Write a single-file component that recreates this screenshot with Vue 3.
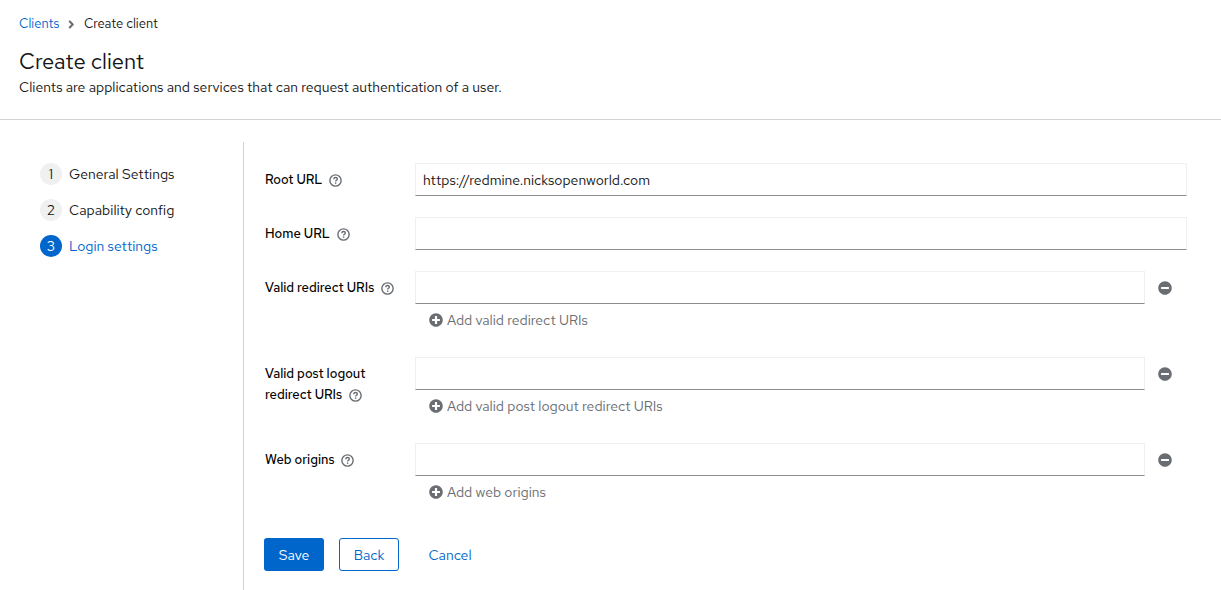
<template>
  <div class="page">
    <header class="page-header">
      <nav class="breadcrumb" aria-label="Breadcrumb">
        <a href="#clients">Clients</a>
        <svg class="breadcrumb-divider" viewBox="0 0 256 512" aria-hidden="true">
          <path :d="icons.angleRight" />
        </svg>
        <span aria-current="page">Create client</span>
      </nav>
      <h1 class="page-title">Create client</h1>
      <p class="page-description">
        Clients are applications and services that can request authentication of a user.
      </p>
    </header>

    <div class="wizard">
      <nav class="wizard-nav" aria-label="Wizard steps">
        <ol class="wizard-steps">
          <li v-for="(step, index) in steps" :key="step">
            <button
              type="button"
              :class="['wizard-step', { current: currentStep === index }]"
              @click="currentStep = index"
            >
              <span class="step-number">{{ index + 1 }}</span>
              <span>{{ step }}</span>
            </button>
          </li>
        </ol>
      </nav>

      <form class="wizard-main" @submit.prevent>
        <div v-for="field in fields" :key="field.id" class="form-group">
          <div class="form-label">
            <label :for="field.id">{{ field.label }}</label>
            <button type="button" class="help-button" :aria-label="'Help for ' + field.label">
              <svg viewBox="0 0 12 12" aria-hidden="true">
                <circle cx="6" cy="6" r="5.2" />
                <path d="M4.4 4.8C4.4 3.8 5.1 3.3 6 3.3s1.7.5 1.7 1.4C7.7 5.8 6.1 5.7 6.1 6.9" />
                <path d="M6.1 7.8v1.3" />
              </svg>
            </button>
          </div>
          <div class="form-control">
            <div class="input-row">
              <input :id="field.id" v-model="field.value" type="text" class="text-input" />
              <button v-if="field.addLabel" type="button" class="remove-button" aria-label="Remove">
                <svg class="icon" viewBox="0 0 512 512" aria-hidden="true">
                  <path :d="icons.minusCircle" />
                </svg>
              </button>
            </div>
            <button v-if="field.addLabel" type="button" class="add-button">
              <svg class="icon" viewBox="0 0 512 512" aria-hidden="true">
                <path :d="icons.plusCircle" />
              </svg>
              {{ field.addLabel }}
            </button>
          </div>
        </div>

        <div class="form-actions">
          <button type="submit" class="button primary">Save</button>
          <button type="button" class="button secondary">Back</button>
          <button type="button" class="button link">Cancel</button>
        </div>
      </form>
    </div>
  </div>
</template>

<script setup>
import { ref } from "vue";

const steps = ["General Settings", "Capability config", "Login settings"];
const currentStep = ref(2);

const fields = ref([
  { id: "root-url", label: "Root URL", value: "https://redmine.nicksopenworld.com" },
  { id: "home-url", label: "Home URL", value: "" },
  {
    id: "redirect-uris",
    label: "Valid redirect URIs",
    value: "",
    addLabel: "Add valid redirect URIs",
  },
  {
    id: "logout-uris",
    label: "Valid post logout redirect URIs",
    value: "",
    addLabel: "Add valid post logout redirect URIs",
  },
  { id: "web-origins", label: "Web origins", value: "", addLabel: "Add web origins" },
]);

const icons = {
  angleRight:
    "M224 273l-136 136c-9 9-25 9-34 0l-23-23c-9-9-9-24 0-34l97-96-97-96c-9-9-9-25 0-34L54 103c9-9 25-9 34 0l136 136c9 9 9 25 0 34z",
  plusCircle:
    "M256 8C119 8 8 119 8 256s111 248 248 248 248-111 248-248S393 8 256 8zm144 276c0 7-5 12-12 12h-92v92c0 7-5 12-12 12h-56c-7 0-12-5-12-12v-92h-92c-7 0-12-5-12-12v-56c0-7 5-12 12-12h92v-92c0-7 5-12 12-12h56c7 0 12 5 12 12v92h92c7 0 12 5 12 12v56z",
  minusCircle:
    "M256 8C119 8 8 119 8 256s111 248 248 248 248-111 248-248S393 8 256 8zM124 296c-7 0-12-5-12-12v-56c0-7 5-12 12-12h264c7 0 12 5 12 12v56c0 7-5 12-12 12H124z",
};
</script>

<style>
body {
  background-color: #ffffff;
}
</style>

<style scoped>
.page {
  display: flex;
  flex-direction: column;
  min-height: 100vh;
  color: #151515;
  font-family: "Red Hat Text", Lato, sans-serif;
  font-size: 14px;
  line-height: 22px;
}

button,
input {
  font: inherit;
}

button {
  background: none;
  border: none;
  padding: 0;
  cursor: pointer;
}

.page-header {
  padding: 14px 19px 21px;
  border-bottom: 1px solid #d2d2d2;
}

.breadcrumb {
  display: flex;
  align-items: center;
  font-size: 13px;
  line-height: 20px;
}

.breadcrumb a {
  color: #0066cc;
  text-decoration: none;
}

.breadcrumb-divider {
  height: 13px;
  margin: 0 9px;
  fill: #6a6e73;
}

.page-title {
  margin: 13px 0 0;
  font-size: 22px;
  font-weight: 400;
  line-height: 29px;
}

.page-description {
  margin: 0;
}

.wizard {
  display: flex;
  flex: 1;
  padding-top: 22px;
}

.wizard-nav {
  flex: 0 0 243px;
  border-right: 1px solid #d2d2d2;
}

.wizard-steps {
  display: flex;
  flex-direction: column;
  gap: 14px;
  margin: 0;
  padding: 21px 20px 0 40px;
  list-style: none;
}

.wizard-step {
  display: flex;
  align-items: center;
  gap: 7px;
  color: #151515;
}

.step-number {
  width: 22px;
  height: 22px;
  border-radius: 50%;
  background-color: #f0f0f0;
  text-align: center;
}

.wizard-step.current {
  color: #0066cc;
}

.wizard-step.current .step-number {
  background-color: #0066cc;
  color: #ffffff;
}

.wizard-main {
  flex: 1;
  display: flex;
  flex-direction: column;
  gap: 21px;
  padding: 21px 34px 19px 20px;
}

.form-group {
  display: flex;
}

.form-label {
  flex: 0 0 151px;
  box-sizing: border-box;
  padding: 6px 20px 0 1px;
  font-size: 13px;
  font-weight: 500;
  line-height: 21px;
  color: #000000;
}

.help-button {
  margin-left: 7px;
  line-height: 12px;
  vertical-align: -3px;
}

.help-button svg {
  display: block;
  width: 13px;
  height: 13px;
  fill: none;
  stroke: #6a6e73;
  stroke-width: 1.3;
}

.form-control {
  flex: 1;
}

.input-row {
  display: flex;
}

.text-input {
  flex: 1;
  min-width: 0;
  height: 33px;
  box-sizing: border-box;
  padding: 0 7px;
  border: 1px solid #f0f0f0;
  border-bottom-color: #8a8d90;
  border-radius: 0;
  outline: none;
  background-color: #ffffff;
  color: #151515;
}

.icon {
  width: 14px;
  height: 14px;
  fill: #6a6e73;
}

.remove-button {
  display: flex;
  align-items: center;
  padding: 0 15px 0 13px;
}

.add-button {
  display: flex;
  align-items: center;
  gap: 4px;
  height: 32px;
  padding: 0 14px;
  color: #6a6e73;
}

.form-actions {
  display: flex;
  margin-top: 9px;
}

.button {
  width: 60px;
  height: 33px;
  margin-right: 15px;
  border-radius: 3px;
}

.primary {
  background-color: #0066cc;
  color: #ffffff;
}

.secondary {
  border: 1px solid #0066cc;
  color: #0066cc;
}

.link {
  width: 72px;
  color: #0066cc;
}
</style>
